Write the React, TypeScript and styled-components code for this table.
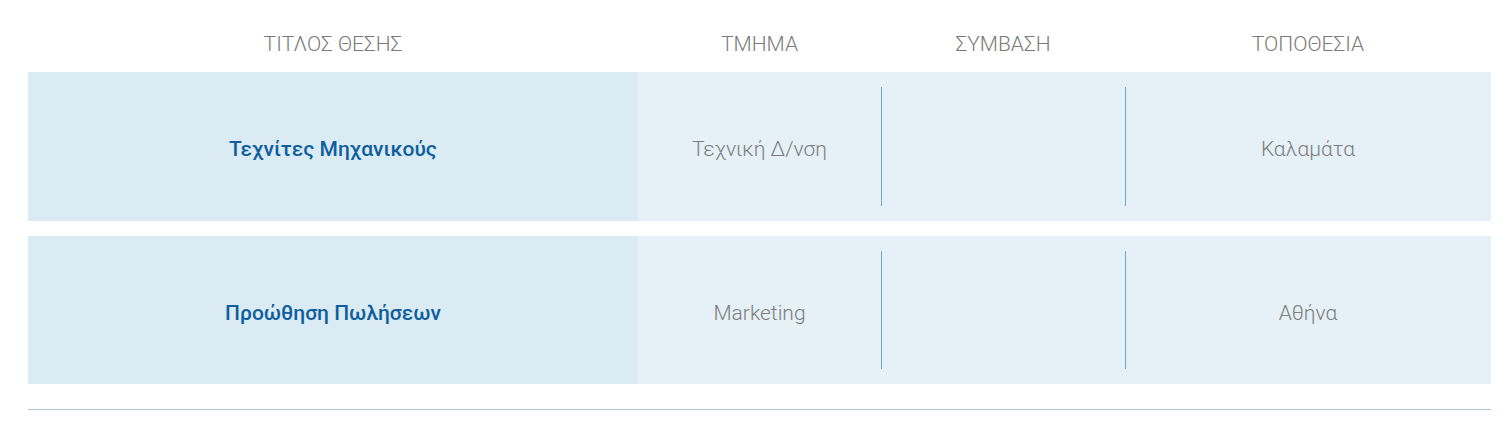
import React from 'react';
import styled, { createGlobalStyle } from 'styled-components';

const GlobalStyle = createGlobalStyle`
  body {
    margin: 0;
    background: #fff;
    font-family: Roboto, "Liberation Sans", sans-serif;
  }
`;

const jobs = [
    { title: 'Τεχνίτες Μηχανικούς', dept: 'Τεχνική Δ/νση', contract: '', place: 'Καλαμάτα' },
    { title: 'Προώθηση Πωλήσεων', dept: 'Marketing', contract: '', place: 'Αθήνα' },
];

const columns = '610px 243px 244px 1fr';

export default function App() {
    return (
        <>
            <GlobalStyle/>
            <Wrapper>
                <Head>
                    <HeadCell>ΤΙΤΛΟΣ ΘΕΣΗΣ</HeadCell>
                    <HeadCell>ΤΜΗΜΑ</HeadCell>
                    <HeadCell>ΣΥΜΒΑΣΗ</HeadCell>
                    <HeadCell>ΤΟΠΟΘΕΣΙΑ</HeadCell>
                </Head>
                <Rows>
                    {jobs.map((job) => (
                        <Row key={job.title}>
                            <TitleCell>{job.title}</TitleCell>
                            <Cell>{job.dept}</Cell>
                            <Cell $divider>{job.contract}</Cell>
                            <Cell $divider>{job.place}</Cell>
                        </Row>
                    ))}
                </Rows>
                <BottomLine/>
            </Wrapper>
        </>
    );
}

const Wrapper = styled.div`
  width: 1463px;
  margin-left: 28px;
`;

const Head = styled.div`
  display: grid;
  grid-template-columns: ${columns};
  height: 72px;
  align-items: center;
  padding-top: 16px;
  box-sizing: border-box;
`;

const HeadCell = styled.div`
  text-align: center;
  font-size: 21px;
  font-weight: 300;
  color: #7a7a7a;
`;

const Rows = styled.div`
  display: flex;
  flex-direction: column;
  gap: 15px;
`;

const Row = styled.div`
  display: grid;
  grid-template-columns: ${columns};
  height: 148.5px;
  background: #e5f0f7;
`;

const TitleCell = styled.div`
  display: flex;
  align-items: center;
  justify-content: center;
  padding-top: 6px;
  background: #dbebf4;
  color: #0f5e9e;
  font-size: 21px;
  font-weight: 500;
`;

const Cell = styled.div<{ $divider?: boolean }>`
  position: relative;
  display: flex;
  align-items: center;
  justify-content: center;
  padding-top: 6px;
  color: #7d7d7d;
  font-size: 21px;
  font-weight: 300;

  &::before {
    content: '';
    display: ${(p) => (p.$divider ? 'block' : 'none')};
    position: absolute;
    left: 0;
    top: 15px;
    bottom: 15px;
    width: 1px;
    background: #6aaac2;
  }
`;

const BottomLine = styled.div`
  margin-top: 25px;
  height: 1px;
  background: #a8c4d6;
`;
